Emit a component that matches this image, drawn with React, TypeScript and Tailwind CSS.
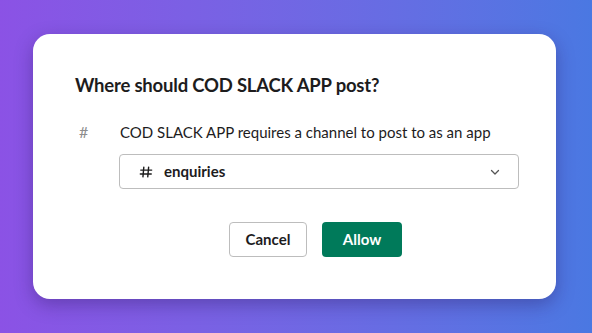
import React from 'react';

const Hash = ({ className }: { className?: string }) => (
  <svg viewBox="0 0 16 16" className={className} fill="none" stroke="currentColor" strokeWidth="1.6" strokeLinecap="round">
    <path d="M5.5 2.5 4.5 13.5M11 2.5 10 13.5M2 5.8h12.5M1.5 10.2H14" />
  </svg>
);

const App = () => {
  return (
    <div
      className="w-[592px] h-[333px] flex items-center justify-center bg-gradient-to-r from-[#8b52e5] to-[#4a78e2]"
      style={{ fontFamily: 'Lato, "Noto Sans", sans-serif' }}
    >
      <div className="w-[523px] h-[265px] ml-[-3px] bg-white rounded-[17px] shadow-[0_6px_18px_rgba(40,20,90,0.35)] pl-[42px] pr-[37px] pt-[40px]">
        <h1 className="text-[18.5px] leading-[22px] font-bold text-[#1d1c1d] tracking-[-0.2px]">
          Where should COD SLACK APP post?
        </h1>
        <div className="flex mt-[26px]">
          <div className="w-[44px] pl-[4px] text-[16px] leading-[20px] text-[#8d8d8d]">#</div>
          <div className="flex-1">
            <div className="text-[15px] leading-[20px] text-[#1d1c1d] ml-[1px]">
              COD SLACK APP requires a channel to post to as an app
            </div>
            <div className="mt-[12px] h-[35px] border border-[#bdbdbd] rounded-[4px] flex items-center pl-[19px] pr-[17px]">
              <Hash className="w-[14px] h-[14px] text-[#1d1c1d]" />
              <span className="ml-[11px] text-[15px] font-bold text-[#1d1c1d]">enquiries</span>
              <svg viewBox="0 0 12 12" className="ml-auto w-[12px] h-[12px] text-[#555]" fill="none" stroke="currentColor" strokeWidth="1.3" strokeLinecap="round" strokeLinejoin="round">
                <path d="M2.5 4.5 6 8l3.5-3.5" />
              </svg>
            </div>
            <div className="flex gap-[15px] mt-[33px] ml-[110px]">
              <button className="w-[78px] h-[35px] border border-[#bdbdbd] rounded-[4px] text-[15px] font-bold text-[#1d1c1d] bg-white">
                Cancel
              </button>
              <button className="w-[80px] h-[35px] rounded-[4px] text-[15px] font-bold text-white bg-[#007a5a]">
                Allow
              </button>
            </div>
          </div>
        </div>
      </div>
    </div>
  );
};

export default App;
